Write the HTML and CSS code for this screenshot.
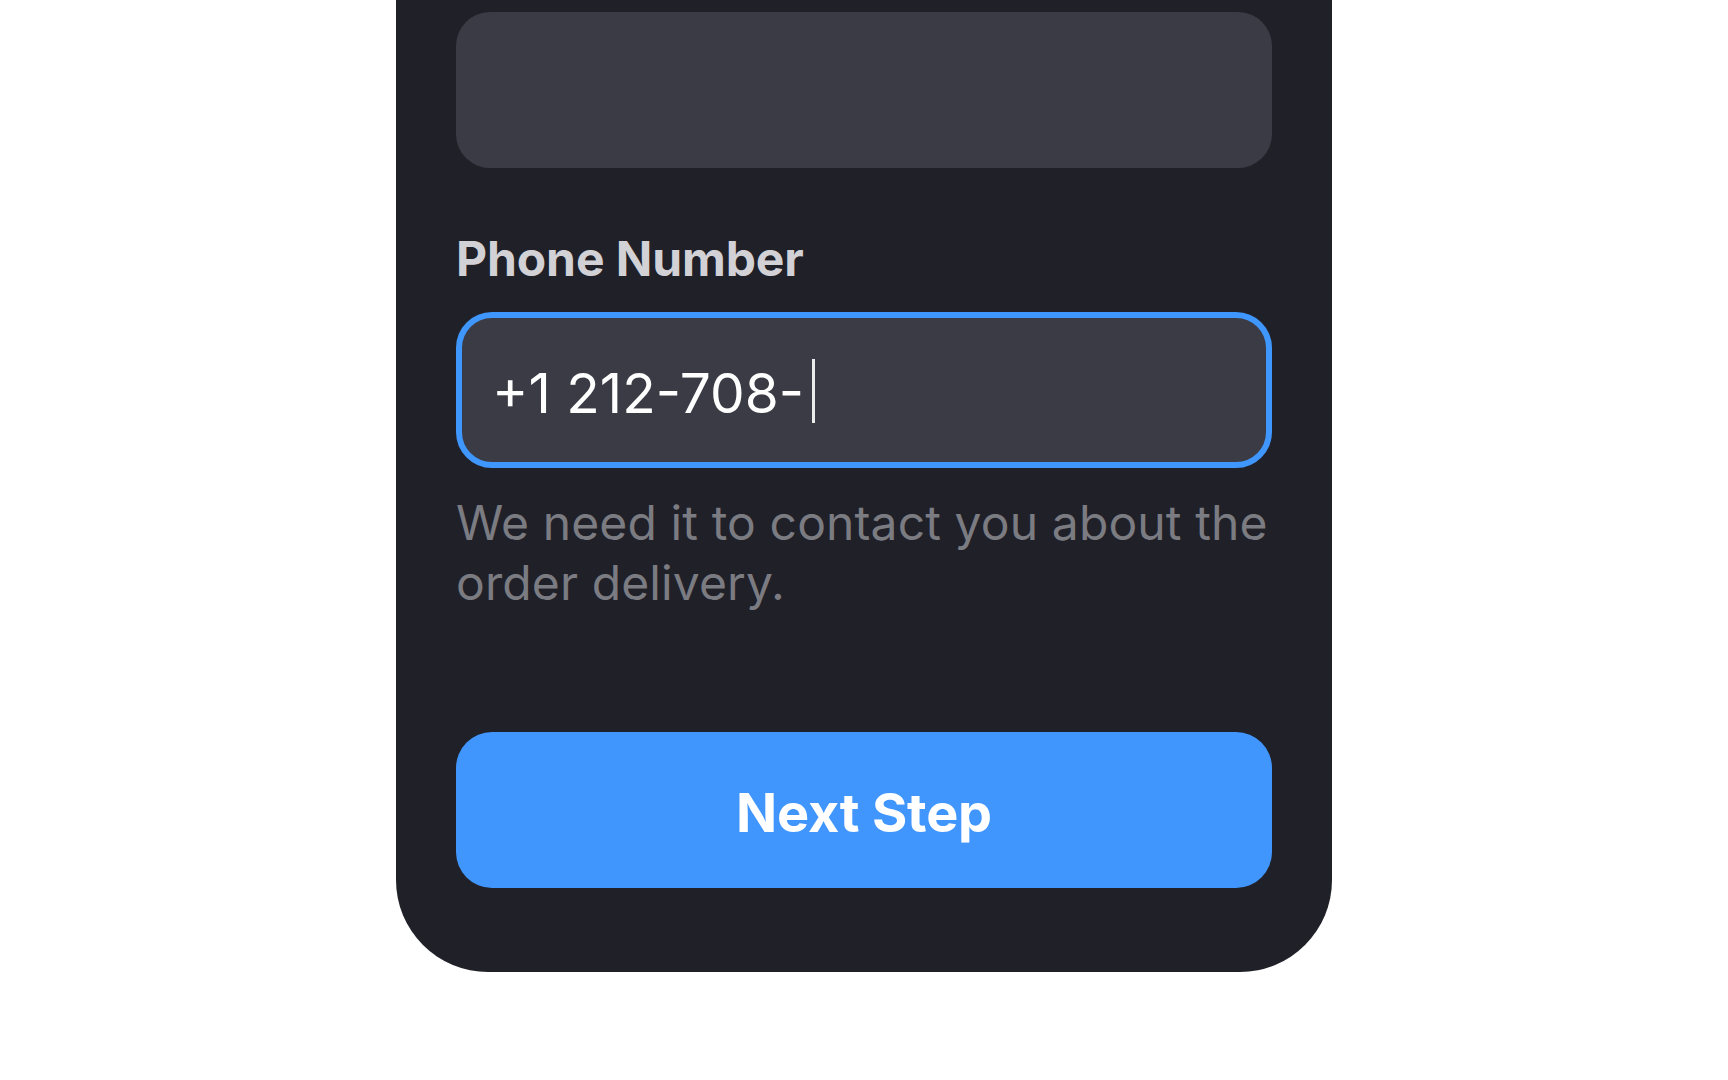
FILE: index.html
```html
<!DOCTYPE html>
<html lang="en">
<head>
<meta charset="utf-8">
<title>Phone Number</title>
<link rel="stylesheet" href="styles.css">
</head>
<body>
<main class="sheet">
  <div class="field-box"></div>
  <label class="label" for="phone">Phone Number</label>
  <div class="input focused" id="phone">
    <span class="value">+1 212-708-</span><span class="caret"></span>
  </div>
  <p class="hint">We need it to contact you about the order delivery.</p>
  <button class="primary" type="button">Next Step</button>
</main>
</body>
</html>
```
FILE: styles.css
```css
html, body {
  margin: 0;
  padding: 0;
  background: #ffffff;
}

body {
  font-family: Inter, "Noto Sans", "Liberation Sans", sans-serif;
  height: 1080px;
  overflow: hidden;
}

.sheet {
  width: 936px;
  margin: 0 auto;
  box-sizing: border-box;
  padding: 12px 60px 84px;
  background: #202029;
  border-radius: 0 0 92px 92px;
  display: flex;
  flex-direction: column;
}

.field-box {
  height: 156px;
  border-radius: 34px;
  background: #3b3b45;
}

.label {
  margin-top: 61px;
  font-size: 48px;
  line-height: 60px;
  font-weight: 700;
  color: #d1d1d6;
  letter-spacing: -0.1px;
}

.input {
  margin-top: 23px;
  height: 156px;
  box-sizing: border-box;
  border: 6px solid #3f96fc;
  border-radius: 36px;
  background: #3b3b45;
  display: flex;
  align-items: center;
  padding-left: 30px;
  padding-top: 5px;
}

.value {
  font-size: 55px;
  line-height: 64px;
  color: #ffffff;
  font-weight: 400;
}

.caret {
  display: inline-block;
  width: 3px;
  height: 64px;
  margin-left: 8px;
  margin-top: -4px;
  background: #ececec;
}

.hint {
  margin: 25px -10px 0 0;
  font-size: 48px;
  line-height: 60px;
  color: #7b7b82;
  font-weight: 400;
  letter-spacing: 0.12px;
}

.primary {
  margin-top: 119px;
  height: 156px;
  border: 0;
  border-radius: 36px;
  background: #4096fd;
  color: #ffffff;
  font-family: inherit;
  font-size: 54px;
  font-weight: 700;
  padding: 4px 0 0;
  letter-spacing: -0.2px;
}
```
